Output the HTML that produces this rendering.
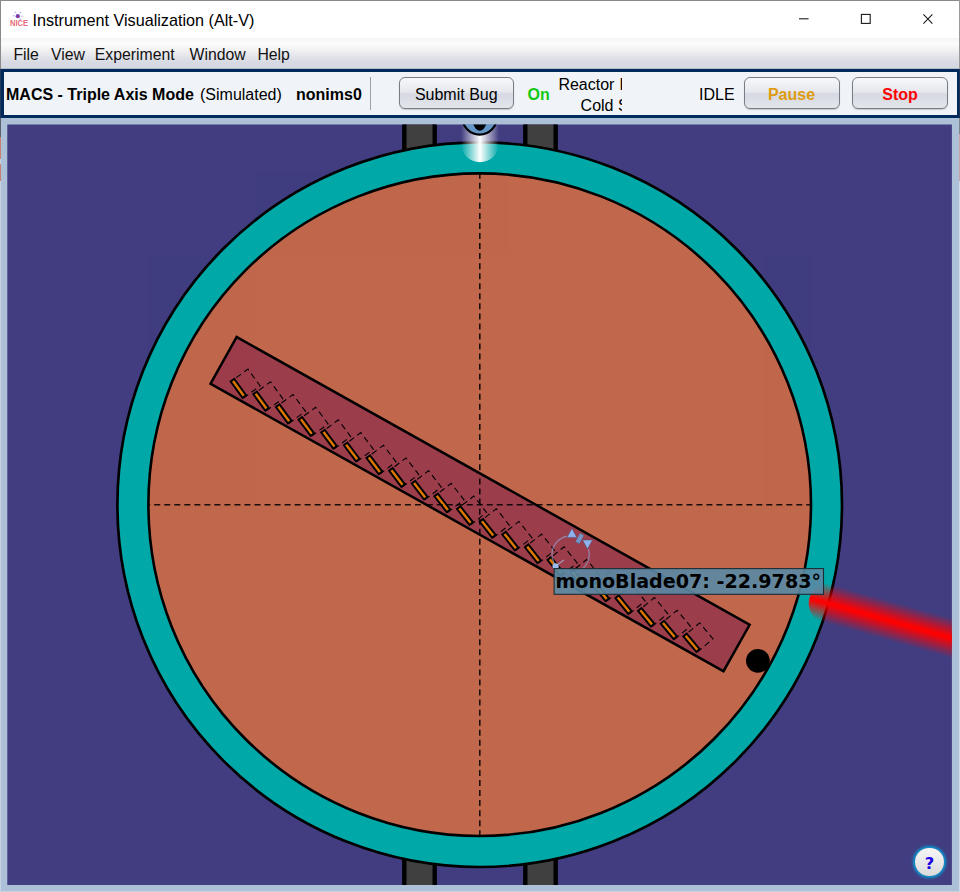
<!DOCTYPE html>
<html lang="en">
<head>
<meta charset="utf-8">
<title>Instrument Visualization (Alt-V)</title>
<style>
html,body{margin:0;padding:0;}
body{width:960px;height:892px;position:relative;overflow:hidden;background:#acc0d8;font-family:"Liberation Sans",sans-serif;color:#000;}
.abs{position:absolute;}
#titlebar{left:0;top:0;width:960px;height:38px;background:#fff;}
#title{left:32.5px;top:10px;font-size:16.2px;line-height:20px;white-space:nowrap;color:#000;}
#menubar{left:0;top:38px;width:960px;height:31px;background:linear-gradient(#f4f5f6 0%,#fcfcfc 18%,#f1f1f3 40%,#e3e4e9 60%,#d7dae3 79%,#d5d8e1 95%,#a8acb8 100%);}
#menubar span{position:absolute;top:7px;font-size:15.8px;line-height:20px;white-space:nowrap;color:#111;}
#toolbar{left:1px;top:69px;width:958px;height:49px;box-sizing:border-box;border:3px solid #00295c;border-right-width:2.5px;background:#f0f4f8;}
.tb{position:absolute;font-size:16px;line-height:20px;white-space:nowrap;}
.btn{position:absolute;top:77.4px;height:31.8px;box-sizing:border-box;border:1.5px solid #787c84;border-radius:6px;background:linear-gradient(#f8f8fa 0%,#e6e8ee 45%,#d6d9e2 55%,#e4e6ec 100%);box-shadow:0 1px 1px rgba(120,124,132,.35);font-size:16px;line-height:20px;text-align:center;}
.btn span{position:absolute;left:0;right:0;top:6.4px;}
#winL{left:0;top:0;width:1px;height:118px;background:linear-gradient(#8a8a8a 0,#8a8a8a 69px,#223a5a 69px);}
#winT{left:0;top:0;width:960px;height:1px;background:#8a8a8a;}
#winR{left:958.5px;top:0;width:1.5px;height:69px;background:#9a9a9a;}
#winR2{left:959px;top:69px;width:1px;height:49px;background:#1c3354;}
#edgeL{left:0;top:118px;width:1px;height:774px;background:linear-gradient(#5c626c 0,#5c626c 19px,#c88070 19px,#c88070 41px,#c6d2df 41px,#c6d2df 46px,#c88070 46px,#c88070 63px,#c6d2df 63px);}
#edgeR{left:959px;top:118px;width:1px;height:774px;background:linear-gradient(#7c8490 0,#7c8490 16px,#c8a2aa 16px,#c8a2aa 63px,#d2dce8 63px);}
#edgeB{left:0;top:891px;width:960px;height:1px;background:#c6d2df;}
#help{left:915.2px;top:847.6px;width:28.8px;height:28.8px;border-radius:50%;background:linear-gradient(#f6f6f6,#dadada);box-shadow:0 0 3px 1.8px #00a4dc;text-align:center;font-family:"DejaVu Sans","Liberation Sans",sans-serif;font-weight:bold;font-size:16.4px;line-height:32px;color:#1c00e6;}
</style>
</head>
<body>
<div id="titlebar" class="abs"></div>
<svg class="abs" style="left:8px;top:11px" width="24" height="18" viewBox="0 0 24 18">
<g fill="#a9aff0"><circle cx="7.2" cy="1.3" r="0.75"/><circle cx="12.5" cy="1.5" r="0.8"/><circle cx="5.5" cy="4.7" r="0.8"/><circle cx="14.2" cy="5.2" r="0.7"/><circle cx="12.3" cy="8.2" r="0.75"/><circle cx="19" cy="11.3" r="0.7"/></g>
<g stroke="#c4c8f6" stroke-width="0.5"><line x1="9.8" y1="5.2" x2="7.2" y2="1.3"/><line x1="9.8" y1="5.2" x2="12.5" y2="1.5"/><line x1="9.8" y1="5.2" x2="5.5" y2="4.7"/><line x1="9.8" y1="5.2" x2="14.2" y2="5.2"/><line x1="9.8" y1="5.2" x2="12.3" y2="8.2"/></g>
<circle cx="9.8" cy="5.2" r="2.1" fill="#6a48c4"/><circle cx="10" cy="5.3" r="1" fill="#c02860"/>
<text x="2" y="14.7" font-family="Liberation Sans, sans-serif" font-weight="bold" font-size="8.2" fill="#e35864" fill-opacity="0.9" textLength="18" lengthAdjust="spacingAndGlyphs">NICE</text>
</svg>
<div id="title" class="abs">Instrument Visualization (Alt-V)</div>
<svg class="abs" style="left:790px;top:8px" width="160" height="24" viewBox="790 8 160 24" fill="none" stroke="#1a1a1a" stroke-width="1.1">
<line x1="799" y1="18.8" x2="808.6" y2="18.8"/>
<rect x="861.4" y="14.4" width="8.8" height="9"/>
<path d="M923.4 14.4 L932.4 23.6 M932.4 14.4 L923.4 23.6"/>
</svg>
<div id="menubar" class="abs">
<span style="left:13.4px">File</span><span style="left:50.9px">View</span><span style="left:94.8px">Experiment</span><span style="left:189.6px">Window</span><span style="left:257.4px">Help</span>
</div>
<div id="toolbar" class="abs"></div>
<div class="tb" style="left:6px;top:84.9px;font-weight:bold" id="t1">MACS - Triple Axis Mode</div>
<div class="tb" style="left:200px;top:84.9px" id="t2">(Simulated)</div>
<div class="tb" style="left:296px;top:84.9px;font-weight:bold" id="t3">nonims0</div>
<div class="abs" style="left:370.1px;top:77px;width:1.2px;height:33.4px;background:#a0a0a4"></div>
<div class="btn" style="left:399px;width:114.5px"><span id="b1">Submit Bug</span></div>
<div class="tb" style="left:527.5px;top:84.9px;font-weight:bold;color:#12c812" id="t4">On</div>
<div class="abs" style="left:550px;top:72px;width:72px;height:43px;overflow:hidden">
<div class="tb" style="left:8.4px;top:2.5px;word-spacing:0.6px" id="t5">Reactor P</div>
<div class="tb" style="left:30.6px;top:23.7px" id="t6">Cold S</div>
</div>
<div class="tb" style="left:699px;top:84.9px" id="t7">IDLE</div>
<div class="btn" style="left:743.5px;width:96px;font-weight:bold;color:#de9c10"><span id="b2">Pause</span></div>
<div class="btn" style="left:852px;width:96px;font-weight:bold;color:#fb0404"><span id="b3">Stop</span></div>

<svg class="abs" style="left:0;top:118px" width="960" height="774" viewBox="0 118 960 774">
<defs>
<linearGradient id="gw" x1="0" y1="0" x2="1" y2="0"><stop offset="0" stop-color="#fff" stop-opacity="0"/><stop offset="0.5" stop-color="#fff" stop-opacity="1"/><stop offset="1" stop-color="#fff" stop-opacity="0"/></linearGradient>
<linearGradient id="gr" x1="0" y1="0" x2="0" y2="1"><stop offset="0" stop-color="#ff0000" stop-opacity="0"/><stop offset="0.46" stop-color="#ff0000" stop-opacity="0.96"/><stop offset="0.5" stop-color="#ff0000" stop-opacity="1"/><stop offset="0.54" stop-color="#ff0000" stop-opacity="0.96"/><stop offset="1" stop-color="#ff0000" stop-opacity="0"/></linearGradient>
<clipPath id="cv"><rect x="7.3" y="124.4" width="944.6" height="760.5"/></clipPath>
</defs>
<g clip-path="url(#cv)">
<rect x="0" y="100" width="960" height="800" fill="#413d80"/>
<g fill="#404040" stroke="#000" stroke-width="4.4">
<rect x="404.3" y="60" width="30.4" height="900"/>
<rect x="525.3" y="60" width="30.4" height="900"/>
</g>
<circle cx="479.7" cy="504.7" r="362.3" fill="#00a8a8" stroke="#000" stroke-width="2.7"/>
<circle cx="479.7" cy="504.7" r="331.3" fill="#c0674c" stroke="#000" stroke-width="2.6"/>
<path d="M461 100 H499 V143.3 A19 19 0 0 1 461 143.3 Z" fill="url(#gw)"/>
<circle cx="479.6" cy="117.3" r="17.3" fill="#6496c8" stroke="#000" stroke-width="2.2"/>
<path d="M471.8 122 L487.6 122 L484 128.6 Q479.8 133 475.6 128.6 Z" fill="#000"/>
<rect x="-294.05" y="-26.75" width="588.1" height="53.5" transform="translate(480.08 504.18) rotate(29.28)" fill="#9c3d4c" stroke="#000" stroke-width="2.5"/>
<g fill="none" stroke="#000" stroke-width="1.1" stroke-dasharray="6 4" stroke-dashoffset="4.4">
<rect x="-1" y="-10" width="20" height="20.8" transform="translate(238.4 388.4) rotate(-36)"/>
<rect x="-1" y="-10" width="20" height="20.8" transform="translate(261.06 401.12) rotate(-36.2)"/>
<rect x="-1" y="-10" width="20" height="20.8" transform="translate(283.71 413.84) rotate(-36.4)"/>
<rect x="-1" y="-10" width="20" height="20.8" transform="translate(306.37 426.56) rotate(-36.6)"/>
<rect x="-1" y="-10" width="20" height="20.8" transform="translate(329.02 439.28) rotate(-36.8)"/>
<rect x="-1" y="-10" width="20" height="20.8" transform="translate(351.68 452) rotate(-37)"/>
<rect x="-1" y="-10" width="20" height="20.8" transform="translate(374.33 464.72) rotate(-37.2)"/>
<rect x="-1" y="-10" width="20" height="20.8" transform="translate(396.99 477.44) rotate(-37.4)"/>
<rect x="-1" y="-10" width="20" height="20.8" transform="translate(419.64 490.16) rotate(-37.6)"/>
<rect x="-1" y="-10" width="20" height="20.8" transform="translate(442.3 502.88) rotate(-37.8)"/>
<rect x="-1" y="-10" width="20" height="20.8" transform="translate(464.95 515.6) rotate(-38)"/>
<rect x="-1" y="-10" width="20" height="20.8" transform="translate(487.61 528.32) rotate(-38.2)"/>
<rect x="-1" y="-10" width="20" height="20.8" transform="translate(510.26 541.04) rotate(-38.4)"/>
<rect x="-1" y="-10" width="20" height="20.8" transform="translate(532.92 553.76) rotate(-38.6)"/>
<rect x="-1" y="-10" width="20" height="20.8" transform="translate(555.57 566.48) rotate(-38.8)"/>
<rect x="-1" y="-10" width="20" height="20.8" transform="translate(578.23 579.2) rotate(-39)"/>
<rect x="-1" y="-10" width="20" height="20.8" transform="translate(600.88 591.92) rotate(-39.2)"/>
<rect x="-1" y="-10" width="20" height="20.8" transform="translate(623.53 604.64) rotate(-39.4)"/>
<rect x="-1" y="-10" width="20" height="20.8" transform="translate(646.19 617.36) rotate(-39.6)"/>
<rect x="-1" y="-10" width="20" height="20.8" transform="translate(668.85 630.08) rotate(-39.8)"/>
<rect x="-1" y="-10" width="20" height="20.8" transform="translate(691.5 642.8) rotate(-40)"/>
</g>
<g fill="#dc7600" stroke="#000" stroke-width="1.95">
<rect x="-2.2" y="-10.1" width="4.4" height="20.2" transform="translate(238.4 388.4) rotate(-36)"/>
<rect x="-2.2" y="-10.1" width="4.4" height="20.2" transform="translate(261.06 401.12) rotate(-36.2)"/>
<rect x="-2.2" y="-10.1" width="4.4" height="20.2" transform="translate(283.71 413.84) rotate(-36.4)"/>
<rect x="-2.2" y="-10.1" width="4.4" height="20.2" transform="translate(306.37 426.56) rotate(-36.6)"/>
<rect x="-2.2" y="-10.1" width="4.4" height="20.2" transform="translate(329.02 439.28) rotate(-36.8)"/>
<rect x="-2.2" y="-10.1" width="4.4" height="20.2" transform="translate(351.68 452) rotate(-37)"/>
<rect x="-2.2" y="-10.1" width="4.4" height="20.2" transform="translate(374.33 464.72) rotate(-37.2)"/>
<rect x="-2.2" y="-10.1" width="4.4" height="20.2" transform="translate(396.99 477.44) rotate(-37.4)"/>
<rect x="-2.2" y="-10.1" width="4.4" height="20.2" transform="translate(419.64 490.16) rotate(-37.6)"/>
<rect x="-2.2" y="-10.1" width="4.4" height="20.2" transform="translate(442.3 502.88) rotate(-37.8)"/>
<rect x="-2.2" y="-10.1" width="4.4" height="20.2" transform="translate(464.95 515.6) rotate(-38)"/>
<rect x="-2.2" y="-10.1" width="4.4" height="20.2" transform="translate(487.61 528.32) rotate(-38.2)"/>
<rect x="-2.2" y="-10.1" width="4.4" height="20.2" transform="translate(510.26 541.04) rotate(-38.4)"/>
<rect x="-2.2" y="-10.1" width="4.4" height="20.2" transform="translate(532.92 553.76) rotate(-38.6)"/>
<rect x="-2.2" y="-10.1" width="4.4" height="20.2" transform="translate(555.57 566.48) rotate(-38.8)"/>
<rect x="-2.2" y="-10.1" width="4.4" height="20.2" transform="translate(578.23 579.2) rotate(-39)"/>
<rect x="-2.2" y="-10.1" width="4.4" height="20.2" transform="translate(600.88 591.92) rotate(-39.2)"/>
<rect x="-2.2" y="-10.1" width="4.4" height="20.2" transform="translate(623.53 604.64) rotate(-39.4)"/>
<rect x="-2.2" y="-10.1" width="4.4" height="20.2" transform="translate(646.19 617.36) rotate(-39.6)"/>
<rect x="-2.2" y="-10.1" width="4.4" height="20.2" transform="translate(668.85 630.08) rotate(-39.8)"/>
<rect x="-2.2" y="-10.1" width="4.4" height="20.2" transform="translate(691.5 642.8) rotate(-40)"/>
</g>
<g stroke="#000" stroke-width="1.6" stroke-dasharray="6 4.05" opacity="0.86">
<line x1="479.8" y1="172.7" x2="479.8" y2="472"/>
<line x1="479.8" y1="478.5" x2="479.8" y2="836"/>
<line x1="148.5" y1="504.7" x2="423" y2="504.7" stroke-dashoffset="4.3" stroke-dasharray="6 4.027"/>
<line x1="426.8" y1="504.7" x2="811" y2="504.7" stroke-dasharray="6 3.985"/>
</g>
<circle cx="757.9" cy="660.8" r="11.9" fill="#000"/>
<g transform="translate(828.3 603.5) rotate(15.7)">
<path d="M0 -19.6 H200 V19.6 H0 A19.6 19.6 0 0 1 0 -19.6 Z" fill="url(#gr)"/>
</g>
<g>
<path d="M567.05 536.24 A18.6 18.6 0 1 0 588.39 549.06" fill="none" stroke="#94a4d4" stroke-opacity="0.6" stroke-width="1.4"/>
<line x1="555.6" y1="566.3" x2="563.8" y2="560" stroke="#aab8e0" stroke-opacity="0.75" stroke-width="1.1"/>
<circle cx="555.6" cy="566.3" r="3.1" fill="#9fbcee"/>
<path d="M571.9 528.5 L567 537.4 L576.9 537.4 Z" fill="#8db2ee" stroke="#4a4a66" stroke-width="0.5"/>
<path d="M582.5 540 L592.5 540 L587.5 548.9 Z" fill="#8db2ee" stroke="#4a4a66" stroke-width="0.5"/>
<g transform="translate(579.7 538.6) rotate(-62)"><rect x="-4.8" y="-2.2" width="9.6" height="4.4" fill="#84a6dc" stroke="#4a5878" stroke-width="0.5"/><line x1="-4.8" y1="-0.7" x2="4.8" y2="-0.7" stroke="#566a94" stroke-width="0.45"/><line x1="-4.8" y1="0.8" x2="4.8" y2="0.8" stroke="#566a94" stroke-width="0.45"/></g>
</g>
<rect x="554.1" y="568.6" width="269.4" height="25.7" fill="#5a89a4" fill-opacity="0.91" stroke="#1c2c34" stroke-width="1.1"/>
<text x="555.4" y="588.1" font-family="DejaVu Sans, Liberation Sans, sans-serif" font-weight="bold" font-size="19.1" fill="#000" id="tip">monoBlade07: -22.9783°</text>
</g>
</svg>
<div id="help" class="abs">?</div>
<div id="winT" class="abs"></div><div id="winL" class="abs"></div><div id="winR" class="abs"></div><div id="winR2" class="abs"></div>
<div id="edgeL" class="abs"></div><div id="edgeR" class="abs"></div><div id="edgeB" class="abs"></div>
</body>
</html>
